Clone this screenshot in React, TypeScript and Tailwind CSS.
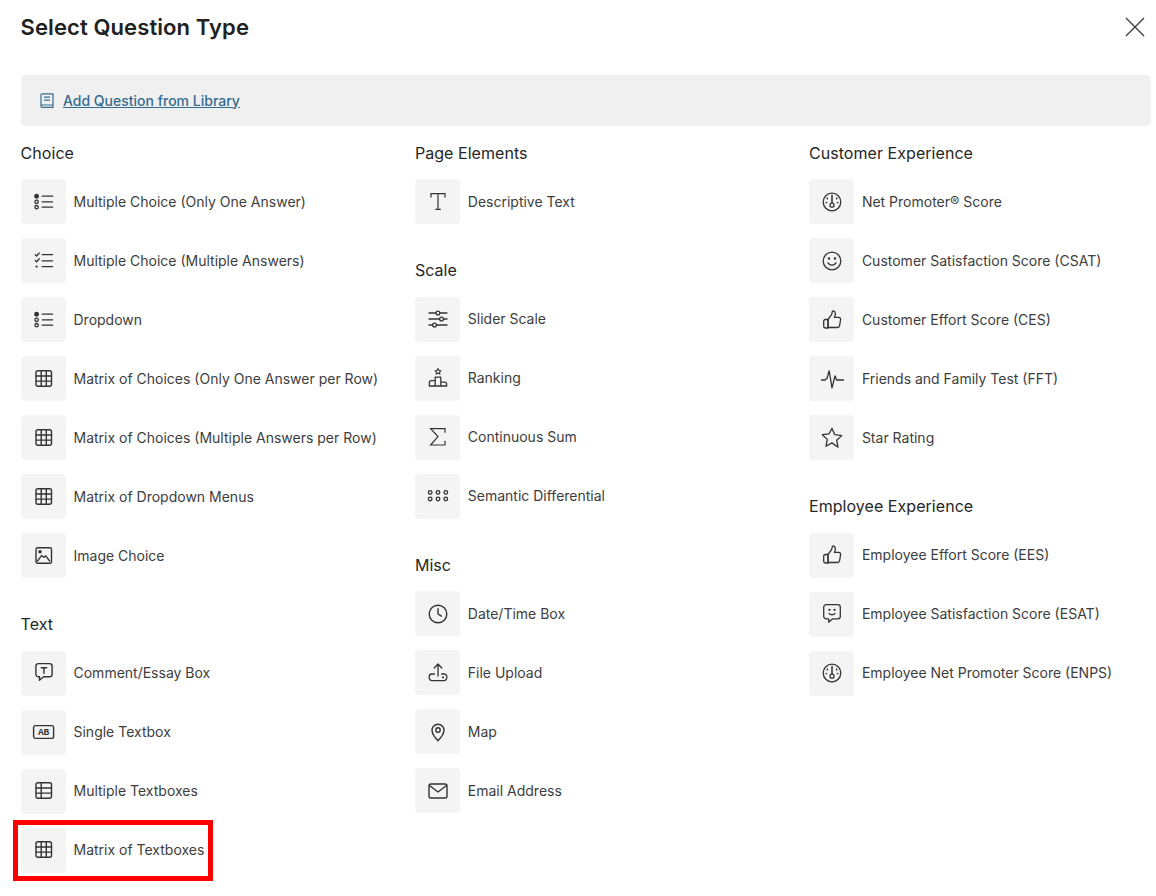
import React from "react";

const S = ({ children }: { children: React.ReactNode }) => (
  <svg width="24" height="24" viewBox="0 0 24 24" fill="none" stroke="#333333" strokeWidth="1.3" strokeLinecap="round" strokeLinejoin="round">
    {children}
  </svg>
);

const RadioList = () => (
  <S>
    <circle cx="4.6" cy="6.2" r="1.8" fill="#333333" />
    <circle cx="4.6" cy="11.8" r="1.7" />
    <circle cx="4.6" cy="17.2" r="1.7" />
    <path d="M10.2 6.2H20.6M10.2 11.8H20.6M10.2 17.2H20.6" />
  </S>
);
const CheckList = () => (
  <S>
    <path d="M3.2 5.6l1.4 1.4 2.6-3M3.2 11.4l1.4 1.4 2.6-3" />
    <circle cx="4.6" cy="17.6" r=".5" fill="#333333" />
    <path d="M10.2 5.6H20.6M10.2 11.8H20.6M10.2 17.6H20.6" />
  </S>
);
const GridI = () => (
  <S>
    <rect x="4" y="3.8" width="15.5" height="15.5" rx="2" strokeWidth="1.4" />
    <path d="M9.2 3.8v15.5M14.3 3.8v15.5M4 9h15.5M4 14.1h15.5" strokeWidth="1.4" />
  </S>
);
const TableI = () => (
  <S>
    <rect x="4" y="3.8" width="15.5" height="15.5" rx="2" strokeWidth="1.4" />
    <path d="M9.2 3.8v15.5M4 9h15.5M4 14.1h15.5" strokeWidth="1.4" />
  </S>
);
const ImageI = () => (
  <S>
    <rect x="4" y="3.8" width="15.5" height="15.5" rx="1.6" strokeWidth="1.4" />
    <circle cx="8" cy="7.8" r="1.1" fill="#333333" />
    <path d="M5.5 17l4.2-5.6 2.4 2 1.7-1.6 3.8 5.2" />
  </S>
);
const CommentI = () => (
  <S>
    <path d="M6.5 2.6h11a2.6 2.6 0 0 1 2.6 2.6v8a2.6 2.6 0 0 1-2.6 2.6h-6l-4 3.4v-3.4H6.5a2.6 2.6 0 0 1-2.6-2.6v-8a2.6 2.6 0 0 1 2.6-2.6z" strokeWidth="1.4" />
    <path d="M9.2 6.8h5.4M11.9 6.8v5.4" strokeWidth="1.4" />
  </S>
);
const ABI = () => (
  <S>
    <rect x="1.6" y="5.6" width="20" height="12.8" rx="2" strokeWidth="1.4" />
    <text x="11.6" y="15" textAnchor="middle" fontFamily="'Liberation Mono', monospace" fontWeight="700" fontSize="9.5" fill="#333333" stroke="none">AB</text>
  </S>
);
const TI = () => (
  <S>
    <path d="M5 7.4V3.6h14v3.8M12 3.6v15.8M9.2 19.4h5.6" strokeLinecap="butt" strokeLinejoin="miter" strokeWidth="1.2" />
  </S>
);
const SliderI = () => (
  <S>
    <path d="M3 6h7M13.8 6H21M3 12h10.6M17.4 12H21M3 18h3.6M10.4 18H21" />
    <circle cx="11.9" cy="6" r="1.9" />
    <circle cx="15.5" cy="12" r="1.9" />
    <circle cx="8.5" cy="18" r="1.9" />
  </S>
);
const RankI = () => (
  <S>
    <path d="M12 2.6l1 1.9 2 .2-1.5 1.4.4 2-1.9-1-1.9 1 .4-2L9 4.7l2-.2z" strokeWidth="1.1" />
    <path d="M9.2 11.2h5.6V20H9.2zM9.2 14.6H5a1.6 1.6 0 0 0-1.6 1.6V20h5.8M14.8 16.2H19a1.6 1.6 0 0 1 1.6 1.6V20h-5.8" />
  </S>
);
const SigmaI = () => (
  <S>
    <path d="M19 7.8V3.6H4.6l7.4 8-7.4 8.4H19v-4.2" strokeLinecap="butt" strokeLinejoin="miter" strokeWidth="1.2" />
  </S>
);
const DotsI = () => (
  <S>
    {[4.2, 12, 19.8].map((x) => (
      <React.Fragment key={x}>
        <circle cx={x} cy="8.4" r="1.8" />
        <circle cx={x} cy="15" r="1.8" />
      </React.Fragment>
    ))}
  </S>
);
const ClockI = () => (
  <S>
    <circle cx="12" cy="12" r="8.8" strokeWidth="1.4" />
    <path d="M12 6.8V12l3.4 2.2" strokeWidth="1.4" />
  </S>
);
const UploadI = () => (
  <S>
    <path d="M12 15V3.2M8.2 7L12 3l3.8 4M8.4 13H6a2.8 2.8 0 0 0-2.8 2.8v1A2.8 2.8 0 0 0 6 19.6h12a2.8 2.8 0 0 0 2.8-2.8v-1A2.8 2.8 0 0 0 18 13h-2.4" />
    <circle cx="17" cy="16.4" r=".4" fill="#333333" />
  </S>
);
const PinI = () => (
  <S>
    <path d="M12 20.8c-3.4-3.6-6-6.8-6-10.6a6 6 0 0 1 12 0c0 3.8-2.6 7-6 10.6z" strokeWidth="1.4" />
    <circle cx="12" cy="10" r="2.2" strokeWidth="1.4" />
  </S>
);
const MailI = () => (
  <S>
    <rect x="3" y="5" width="18" height="14" rx="2" strokeWidth="1.4" />
    <path d="M3.5 6.5L12 13l8.5-6.5" strokeWidth="1.4" />
  </S>
);
const GaugeI = () => (
  <S>
    <circle cx="12" cy="12" r="8.8" strokeWidth="1.3" />
    <path d="M12 5.5v7.5" strokeWidth="1.5" />
    <circle cx="12" cy="15.2" r="2" strokeWidth="1.3" />
    <path d="M7.3 8v1M16.7 8v1M6 12.6h.8M17.2 12.6h.8" strokeWidth="1.3" />
  </S>
);
const SmileI = () => (
  <S>
    <circle cx="12" cy="12" r="8.8" strokeWidth="1.3" />
    <path d="M8 13.8c1 1.6 2.4 2.3 4 2.3s3-.7 4-2.3" />
    <circle cx="9" cy="9.6" r=".6" fill="#333333" />
    <circle cx="15" cy="9.6" r=".6" fill="#333333" />
  </S>
);
const ThumbI = () => (
  <S>
    <path d="M8 11.5l3.4-4.6c.5-.8.7-1.6.7-2.6 0-1 .7-1.5 1.5-1.3 1.2.3 1.8 1.5 1.8 3 0 1.1-.4 2.2-1 3.3h4.3c1.2 0 2.1 1 1.9 2.2l-1 6.1c-.2 1.1-1.1 1.9-2.2 1.9H8z" />
    <path d="M8 11.5H5.3c-.9 0-1.6.7-1.6 1.6v5.2c0 .9.7 1.7 1.6 1.7H8z" />
  </S>
);
const PulseI = () => (
  <S>
    <path d="M1.5 13h3.5l2-1.8 2.2-7.4 2.8 17 3-12 1.6 4.2h7" />
  </S>
);
const StarI = () => (
  <S>
    <path d="M12 2.4l2.9 6.3 6.8.9-5 4.7 1.3 6.9L12 16.9l-6 3.4 1.3-6.9-5-4.7 6.8-.9z" />
  </S>
);
const SmileBubbleI = () => (
  <S>
    <path d="M6.3 2.6h11.4a2.6 2.6 0 0 1 2.6 2.6v9a2.6 2.6 0 0 1-2.6 2.6h-5l-4 3.4v-3.4H6.3a2.6 2.6 0 0 1-2.6-2.6v-9a2.6 2.6 0 0 1 2.6-2.6z" />
    <path d="M9 11.4c.8 1 1.8 1.4 3 1.4s2.2-.4 3-1.4" />
    <circle cx="9.4" cy="7.8" r=".5" fill="#333333" />
    <circle cx="14.6" cy="7.8" r=".5" fill="#333333" />
  </S>
);

type Item = { label: string; icon: React.ReactNode };
type Section = { title: string; items: Item[] };

const columns: { key: string; w: string; sections: Section[] }[] = [
  {
    key: "a",
    w: "w-[394.3px]",
    sections: [
      {
        title: "Choice",
        items: [
          { label: "Multiple Choice (Only One Answer)", icon: <RadioList /> },
          { label: "Multiple Choice (Multiple Answers)", icon: <CheckList /> },
          { label: "Dropdown", icon: <RadioList /> },
          { label: "Matrix of Choices (Only One Answer per Row)", icon: <GridI /> },
          { label: "Matrix of Choices (Multiple Answers per Row)", icon: <GridI /> },
          { label: "Matrix of Dropdown Menus", icon: <GridI /> },
          { label: "Image Choice", icon: <ImageI /> },
        ],
      },
      {
        title: "Text",
        items: [
          { label: "Comment/Essay Box", icon: <CommentI /> },
          { label: "Single Textbox", icon: <ABI /> },
          { label: "Multiple Textboxes", icon: <TableI /> },
          { label: "Matrix of Textboxes", icon: <GridI /> },
        ],
      },
    ],
  },
  {
    key: "b",
    w: "w-[394.1px]",
    sections: [
      { title: "Page Elements", items: [{ label: "Descriptive Text", icon: <TI /> }] },
      {
        title: "Scale",
        items: [
          { label: "Slider Scale", icon: <SliderI /> },
          { label: "Ranking", icon: <RankI /> },
          { label: "Continuous Sum", icon: <SigmaI /> },
          { label: "Semantic Differential", icon: <DotsI /> },
        ],
      },
      {
        title: "Misc",
        items: [
          { label: "Date/Time Box", icon: <ClockI /> },
          { label: "File Upload", icon: <UploadI /> },
          { label: "Map", icon: <PinI /> },
          { label: "Email Address", icon: <MailI /> },
        ],
      },
    ],
  },
  {
    key: "c",
    w: "w-[341px]",
    sections: [
      {
        title: "Customer Experience",
        items: [
          { label: "Net Promoter® Score", icon: <GaugeI /> },
          { label: "Customer Satisfaction Score (CSAT)", icon: <SmileI /> },
          { label: "Customer Effort Score (CES)", icon: <ThumbI /> },
          { label: "Friends and Family Test (FFT)", icon: <PulseI /> },
          { label: "Star Rating", icon: <StarI /> },
        ],
      },
      {
        title: "Employee Experience",
        items: [
          { label: "Employee Effort Score (EES)", icon: <ThumbI /> },
          { label: "Employee Satisfaction Score (ESAT)", icon: <SmileBubbleI /> },
          { label: "Employee Net Promoter Score (ENPS)", icon: <GaugeI /> },
        ],
      },
    ],
  },
];

export default function App() {
  return (
    <div className="h-[896px] w-[1156px] overflow-hidden bg-white pl-[21px] font-['Inter',sans-serif]">
      <header className="flex h-[54px] w-[1130px] items-center justify-between">
        <h1 className="-ml-[0.5px] text-[22px] font-semibold leading-[30px] tracking-[0.1px] text-[#212121]">Select Question Type</h1>
        <svg className="mr-[4px]" width="24" height="24" viewBox="0 0 24 24" fill="none" stroke="#404040" strokeWidth="1.4">
          <path d="M3 3l18 18M21 3L3 21" />
        </svg>
      </header>
      <div className="mt-[21px] flex h-[51px] w-[1130px] items-center gap-[8px] rounded-[4px] bg-[#f0f0f0] pl-[17px]">
        <svg width="17" height="17" viewBox="0 0 17 17" fill="none" stroke="#336b8f" strokeWidth="1.2" strokeLinejoin="round">
          <path d="M3 14V3C3 2.3 3.5 1.8 4.2 1.8H15v11.2H4.2C3.5 13 3 13.4 3 14.2s.5 1.2 1.2 1.2H15V13" />
          <path d="M6 5.2h6M6 8.2h6" />
        </svg>
        <a className="text-[14px] font-medium leading-[20px] text-[#336b8f] underline">Add Question from Library</a>
      </div>
      <div className="mt-[15px] flex w-[1130px]">
        {columns.map((col) => (
          <div key={col.key} className={`${col.w} flex flex-col gap-[34px]`}>
            {col.sections.map((sec) => (
              <section key={sec.title}>
                <h2 className="mb-[14.4px] -ml-[0.4px] text-[16px] font-normal leading-[24px] tracking-[0.05px] text-[#262626]">{sec.title}</h2>
                <ul className="flex flex-col gap-[14px]">
                  {sec.items.map((it) => (
                    <li key={it.label} className="relative flex items-center gap-[7.5px]">
                      <span className="flex h-[45px] w-[45px] shrink-0 items-center justify-center rounded-[4px] bg-[#f4f4f4]">
                        {it.icon}
                      </span>
                      <span className="text-[14px] leading-[20px] text-[#3d3d3d]">{it.label}</span>
                      {it.label === "Matrix of Textboxes" && (
                        <span className="absolute -left-[8px] -top-[8px] h-[61px] w-[200px] border-[5px] border-[#ff0000]" />
                      )}
                    </li>
                  ))}
                </ul>
              </section>
            ))}
          </div>
        ))}
      </div>
    </div>
  );
}
